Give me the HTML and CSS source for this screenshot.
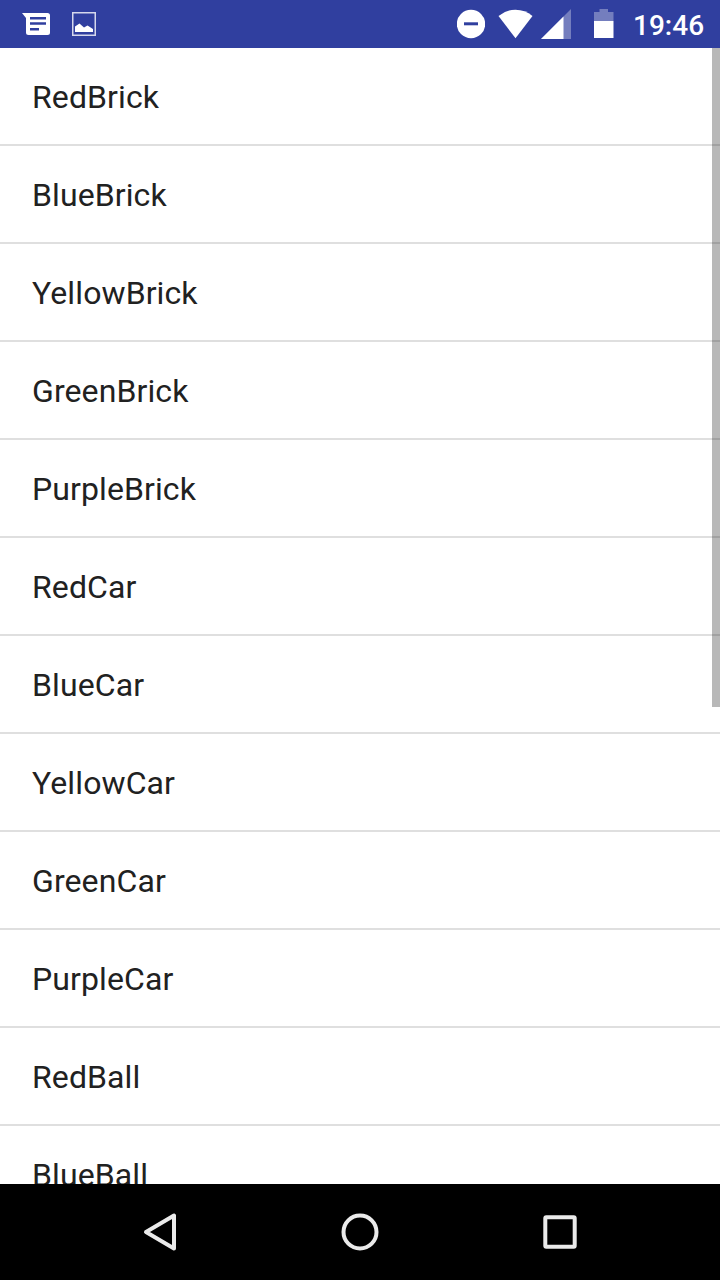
FILE: index.html
```
<!DOCTYPE html>
<html lang="en">
<head>
<meta charset="utf-8">
<title>Items</title>
<link rel="stylesheet" href="styles.css">
</head>
<body>
<div class="screen">
  <header class="status-bar">
    <div class="notifications">
      <svg width="28" height="24" viewBox="0 0 28 24"><path fill="#fff" fill-rule="evenodd" d="M0 1H25.500Q28 1 28 3.500V20.500Q28 23 25.500 23H6.500Q4 23 4 20.500V6ZM8 5V7.500H24V5ZM8 10.200V12.700H24V10.200ZM8 16V18.500H17V16Z"/></svg>
      <svg width="24" height="24" viewBox="0 0 24 24"><rect x=".75" y=".75" width="22.500" height="22.500" fill="none" stroke="#d5d8ec" stroke-width="1.500"/><path fill="#fff" d="M3 20V14.500L7.500 11.500L12 15.500L15.500 13.500L21 17V20Z"/></svg>
    </div>
    <div class="system">
      <svg class="dnd" width="28" height="30" viewBox="0 0 28 30"><circle cx="14" cy="15" r="14.200" fill="#fff"/><path fill="#303f9f" d="M7 13.300H21V16.300H7Z"/></svg>
      <svg class="wifi" width="36" height="30" viewBox="0 0 36 30"><path fill="#fff" d="M.5 7Q8 .8 17.500 .8T34.500 7L17.500 29.300Z"/></svg>
      <svg class="signal" width="30" height="30" viewBox="0 0 30 30"><path fill="#fff" fill-opacity=".33" d="M30 0V30H0Z"/><path fill="#fff" d="M22.500 7.500V30H0Z"/></svg>
      <svg class="battery" width="20" height="30" viewBox="0 0 20 30"><path fill="#fff" fill-opacity=".33" d="M5.500 0H14V3H19.500V12H0V3H5.500Z"/><path fill="#fff" d="M0 12H19.500V29H0Z"/></svg>
      <span class="clock">19:46</span>
    </div>
  </header>
  <main class="list-view">
    <ul class="list">
      <li class="item">RedBrick</li>
      <li class="item">BlueBrick</li>
      <li class="item">YellowBrick</li>
      <li class="item">GreenBrick</li>
      <li class="item">PurpleBrick</li>
      <li class="item">RedCar</li>
      <li class="item">BlueCar</li>
      <li class="item">YellowCar</li>
      <li class="item">GreenCar</li>
      <li class="item">PurpleCar</li>
      <li class="item">RedBall</li>
      <li class="item">BlueBall</li>
    </ul>
    <div class="scrollbar"></div>
  </main>
  <nav class="nav-bar">
    <svg width="40" height="40" viewBox="0 0 40 40"><path fill="none" stroke="#ebebeb" stroke-width="4" stroke-linejoin="round" d="M34 15.500V48.500L6 32Z" transform="translate(0 -12)"/></svg>
    <svg width="40" height="40" viewBox="0 0 40 40"><circle cx="20" cy="20" r="16.500" fill="none" stroke="#ebebeb" stroke-width="4"/></svg>
    <svg width="40" height="40" viewBox="0 0 40 40"><rect x="5.300" y="5.300" width="29.400" height="29.400" rx="1" fill="none" stroke="#ebebeb" stroke-width="4"/></svg>
  </nav>
</div>
</body>
</html>
```
FILE: styles.css
```
body {
  margin: 0;
  font-family: Roboto, "Liberation Sans", sans-serif;
}

svg {
  display: block;
  flex: none;
}

.screen {
  display: flex;
  flex-direction: column;
  width: 720px;
  height: 1280px;
  overflow: hidden;
  background: #fff;
}

.status-bar {
  display: flex;
  flex: none;
  justify-content: space-between;
  align-items: center;
  box-sizing: border-box;
  height: 48px;
  padding: 0 16px 0 22px;
  background: #303f9f;
}

.notifications {
  display: flex;
  gap: 22px;
}

.system {
  display: flex;
  align-items: center;
}

.wifi {
  margin-left: 13px;
}

.signal {
  margin-left: 7px;
}

.battery {
  margin-left: 23px;
}

.clock {
  width: 71px;
  margin-left: 19px;
  padding-top: 3px;
  color: #fff;
  font-size: 28px;
  font-weight: 500;
  line-height: 45px;
  white-space: nowrap;
}

.list-view {
  position: relative;
  flex: 1;
  min-height: 0;
  overflow: hidden;
}

.list {
  margin: 0;
  padding: 0;
  list-style: none;
}

.item {
  height: 96px;
  padding-left: 32px;
  border-bottom: 2px solid #dfdfdf;
  color: #212121;
  font-size: 32px;
  letter-spacing: 0.1px;
  line-height: 98px;
}

.scrollbar {
  position: absolute;
  top: 0;
  right: 0;
  width: 8px;
  height: 659px;
  background: rgba(0, 0, 0, 0.28);
}

.nav-bar {
  display: flex;
  flex: none;
  justify-content: center;
  align-items: center;
  gap: 160px;
  height: 96px;
  background: #000;
}
```
